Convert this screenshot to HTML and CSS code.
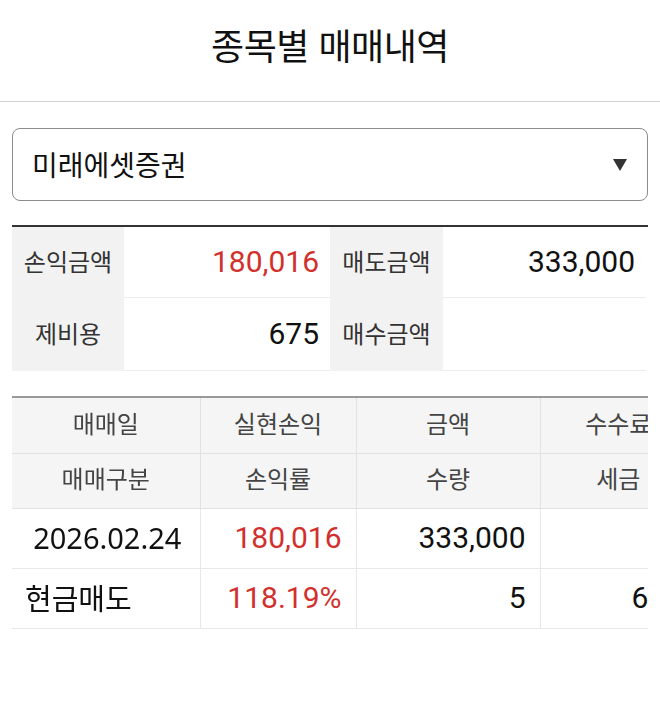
FILE: index.html
```html
<!DOCTYPE html>
<html lang="ko">
<head>
<meta charset="utf-8">
<title>종목별 매매내역</title>
<link rel="stylesheet" href="styles.css">
</head>
<body>
<header class="topbar">
  <h1 class="title">종목별 매매내역</h1>
</header>
<main class="page">
  <div class="select">
    <span class="select-text">미래에셋증권</span>
    <svg class="select-arrow" width="14" height="12" viewBox="0 0 14 12"><path d="M0 0 H14 L7 12 Z" fill="#333"/></svg>
  </div>

  <div class="summary">
    <div class="s-label">손익금액</div>
    <div class="s-value red">180,016</div>
    <div class="s-label">매도금액</div>
    <div class="s-value">333,000</div>
    <div class="s-label">제비용</div>
    <div class="s-value">675</div>
    <div class="s-label">매수금액</div>
    <div class="s-value"></div>
  </div>

  <div class="detail">
    <table class="grid">
      <colgroup>
        <col class="c1"><col class="c2"><col class="c3"><col class="c4">
      </colgroup>
      <thead>
        <tr><th class="sticky">매매일</th><th>실현손익</th><th>금액</th><th>수수료</th></tr>
        <tr><th class="sticky">매매구분</th><th>손익률</th><th>수량</th><th>세금</th></tr>
      </thead>
      <tbody>
        <tr><td class="sticky date">2026.02.24</td><td class="num red">180,016</td><td class="num">333,000</td><td class="num"></td></tr>
        <tr><td class="sticky kind">현금매도</td><td class="num red">118.19%</td><td class="num">5</td><td class="num">675</td></tr>
      </tbody>
    </table>
  </div>
</main>
</body>
</html>
```

FILE: styles.css
```css
* { box-sizing: border-box; }
html, body { margin: 0; padding: 0; background: #fff; }
body {
  font-family: "Noto Sans CJK KR", "Noto Sans", sans-serif;
  color: #111;
}
.topbar {
  height: 102px;
  display: flex;
  align-items: center;
  justify-content: center;
  border-bottom: 1px solid #d0d0d0;
}
.title {
  margin: 0;
  font-size: 36px;
  font-weight: 400;
  color: #111;
  letter-spacing: -0.5px;
  padding-bottom: 14px;
}
.page { padding: 0 12px; }
.select {
  margin-top: 26px;
  height: 73px;
  border: 1.5px solid #8c8c8c;
  border-radius: 8px;
  display: flex;
  align-items: center;
  justify-content: space-between;
  padding: 0 20px 0 19px;
}
.select-text { font-size: 28px; color: #111; padding-bottom: 2px; }
.select-arrow { display: block; }

.summary {
  margin-top: 24px;
  border-top: 2px solid #333;
  display: grid;
  grid-template-columns: 112px 206px 113px 203px;
  grid-template-rows: 71px 73px;
}
.s-label {
  background: #f2f2f2;
  display: flex;
  align-items: center;
  justify-content: center;
  font-size: 24px;
  color: #333;
  padding-bottom: 4px;
}
.s-value {
  border-bottom: 1px solid #ececec;
  display: flex;
  align-items: center;
  justify-content: flex-end;
  padding-right: 11px;
  font-family: Roboto, "Noto Sans", sans-serif;
  font-size: 30px;
  color: #111;
  padding-bottom: 2px;
}
.red { color: #d2302c !important; }

.detail {
  margin-top: 25px;
  border-top: 2px solid #999;
  overflow: hidden;
  width: 636px;
}
.grid {
  border-collapse: collapse;
  table-layout: fixed;
  width: 684px;
}
.c1 { width: 188px; }
.c2 { width: 156px; }
.c3 { width: 184px; }
.c4 { width: 156px; }
th {
  height: 55px;
  background: #f5f5f5;
  font-weight: 400;
  font-size: 24px;
  color: #444;
  text-align: center;
  border-bottom: 1px solid #e2e2e2;
  border-left: 1px solid #e2e2e2;
  padding: 0 0 6px;
  white-space: nowrap;
}
td {
  height: 60px;
  border-bottom: 1px solid #e8e8e8;
  border-left: 1px solid #e8e8e8;
  font-size: 30px;
  white-space: nowrap;
  overflow: hidden;
}
th.sticky, td.sticky { border-left: none; }
.sticky {
  position: sticky;
  left: 0;
  z-index: 1;
  box-shadow: 3px 0 6px -1px rgba(0, 0, 0, 0.12);
}
td.sticky { background: #fff; }
.num {
  text-align: right;
  padding-right: 14px;
  padding-bottom: 2px;
  font-family: Roboto, "Noto Sans", sans-serif;
  color: #111;
}
.date {
  text-align: center;
  font-family: "Noto Sans", sans-serif;
  font-size: 29px;
  padding-left: 4px;
  padding-bottom: 2px;
}
.kind {
  text-align: left;
  padding-left: 13px;
  font-size: 29px;
  color: #111;
  padding-bottom: 4px;
}
```
